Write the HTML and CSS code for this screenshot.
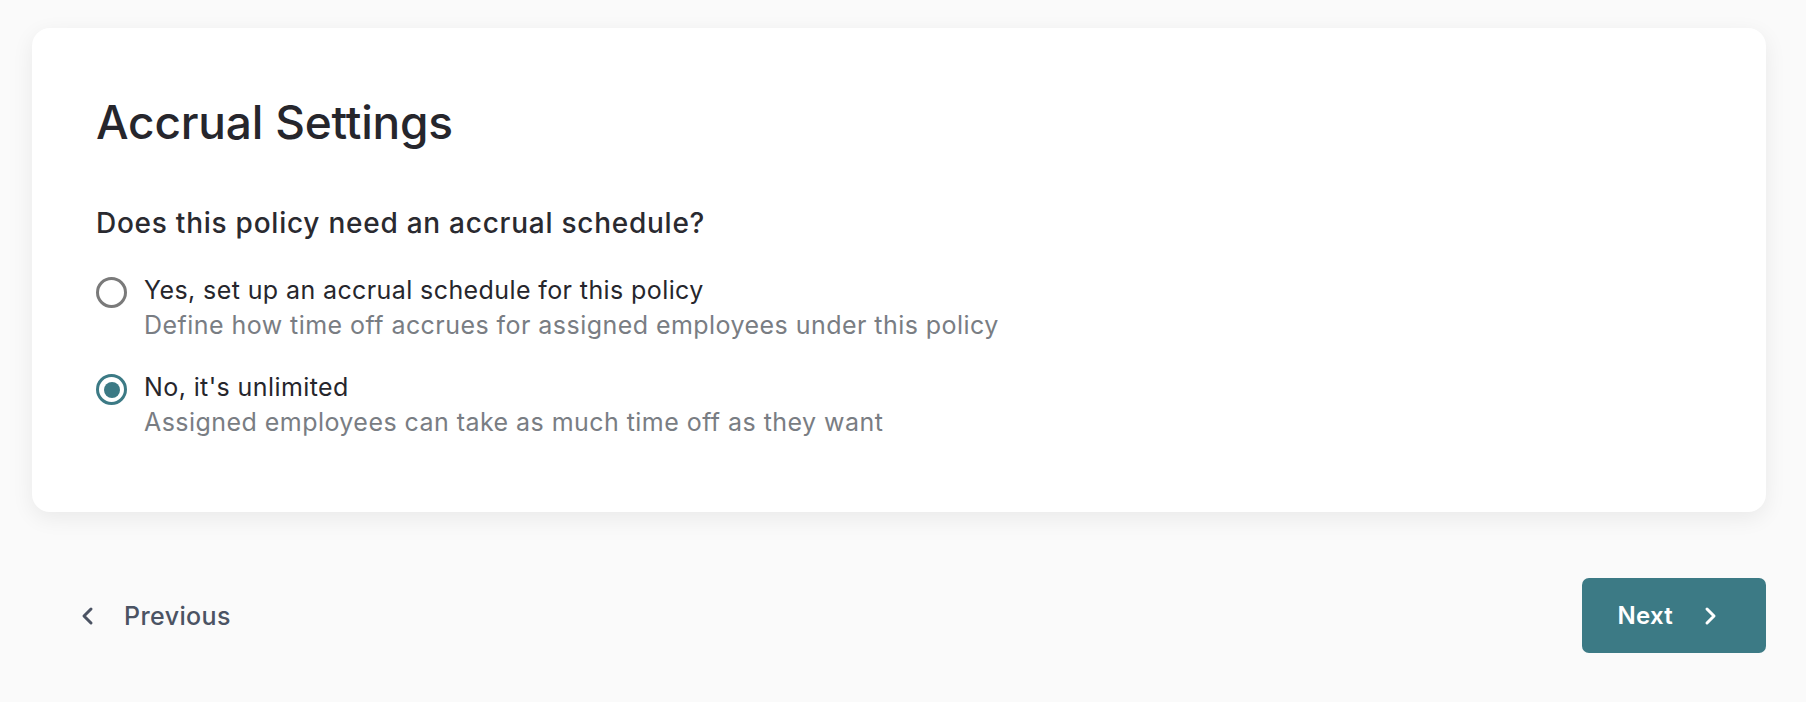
FILE: index.html
```html
<!DOCTYPE html>
<html lang="en">
<head>
<meta charset="utf-8">
<title>Accrual Settings</title>
<link rel="stylesheet" href="styles.css">
</head>
<body>
<div class="page">
  <section class="card">
    <h1 class="title">Accrual Settings</h1>
    <p class="question">Does this policy need an accrual schedule?</p>
    <div class="options">
      <label class="option">
        <span class="radio"></span>
        <span class="option-text">
          <span class="option-title">Yes, set up an accrual schedule for this policy</span>
          <span class="option-desc">Define how time off accrues for assigned employees under this policy</span>
        </span>
      </label>
      <label class="option">
        <span class="radio radio-checked"><span class="radio-dot"></span></span>
        <span class="option-text">
          <span class="option-title">No, it's unlimited</span>
          <span class="option-desc">Assigned employees can take as much time off as they want</span>
        </span>
      </label>
    </div>
  </section>
  <div class="actions">
    <button class="btn-prev" type="button">
      <svg class="icon" viewBox="0 0 24 24" width="24" height="24" aria-hidden="true"><path d="M15 5 L8 12 L15 19" fill="none" stroke="currentColor" stroke-width="3" stroke-linecap="round" stroke-linejoin="round"/></svg>
      <span>Previous</span>
    </button>
    <button class="btn-next" type="button">
      <span>Next</span>
      <svg class="icon" viewBox="0 0 24 24" width="24" height="24" aria-hidden="true"><path d="M9 5 L16 12 L9 19" fill="none" stroke="currentColor" stroke-width="3" stroke-linecap="round" stroke-linejoin="round"/></svg>
    </button>
  </div>
</div>
</body>
</html>
```

FILE: styles.css
```css
html, body {
  margin: 0;
  padding: 0;
  background: #fafafa;
}

body {
  font-family: Inter, "Liberation Sans", sans-serif;
  color: #26262c;
}

.page {
  padding: 28px 40px 0 32px;
}

.card {
  background: #ffffff;
  border-radius: 18px;
  padding: 66px 64px 72px;
  box-shadow: 0 6px 22px rgba(0, 0, 0, 0.07);
}

.title {
  margin: 0;
  font-size: 46px;
  line-height: 56px;
  font-weight: 500;
  color: #26262c;
  letter-spacing: -0.2px;
}

.question {
  margin: 56px 0 0;
  font-size: 28px;
  line-height: 34px;
  font-weight: 500;
  letter-spacing: 0.75px;
  color: #2a2a30;
}

.options {
  margin-top: 33px;
  display: flex;
  flex-direction: column;
  gap: 27px;
}

.option {
  display: flex;
  align-items: flex-start;
  gap: 17px;
}

.radio {
  box-sizing: border-box;
  width: 31px;
  height: 31px;
  margin-top: 4px;
  border: 3px solid #7a7a7a;
  border-radius: 50%;
  display: flex;
  align-items: center;
  justify-content: center;
  flex-shrink: 0;
}

.radio-checked {
  border-color: #3c7a85;
}

.radio-dot {
  width: 16px;
  height: 16px;
  border-radius: 50%;
  background: #3c7a85;
}

.option-text {
  display: flex;
  flex-direction: column;
}

.option-title {
  font-size: 25px;
  line-height: 35px;
  letter-spacing: 0.4px;
  color: #26262c;
}

.option-desc {
  font-size: 25px;
  line-height: 35px;
  letter-spacing: 0.45px;
  color: #797d83;
}

.actions {
  margin-top: 66px;
  display: flex;
  justify-content: space-between;
  align-items: center;
}

.icon {
  display: block;
  flex-shrink: 0;
}

.btn-prev {
  display: flex;
  align-items: center;
  gap: 24px;
  margin-left: 44px;
  padding: 0;
  border: 0;
  background: transparent;
  font-family: inherit;
  font-size: 25px;
  font-weight: 500;
  letter-spacing: 0.4px;
  color: #4b5363;
}

.btn-next {
  display: flex;
  align-items: center;
  gap: 25px;
  height: 75px;
  padding: 0 44px 0 35px;
  border: 0;
  border-radius: 7px;
  background: #3c7a85;
  font-family: inherit;
  font-size: 24px;
  font-weight: 600;
  letter-spacing: 0.3px;
  color: #ffffff;
}
```
